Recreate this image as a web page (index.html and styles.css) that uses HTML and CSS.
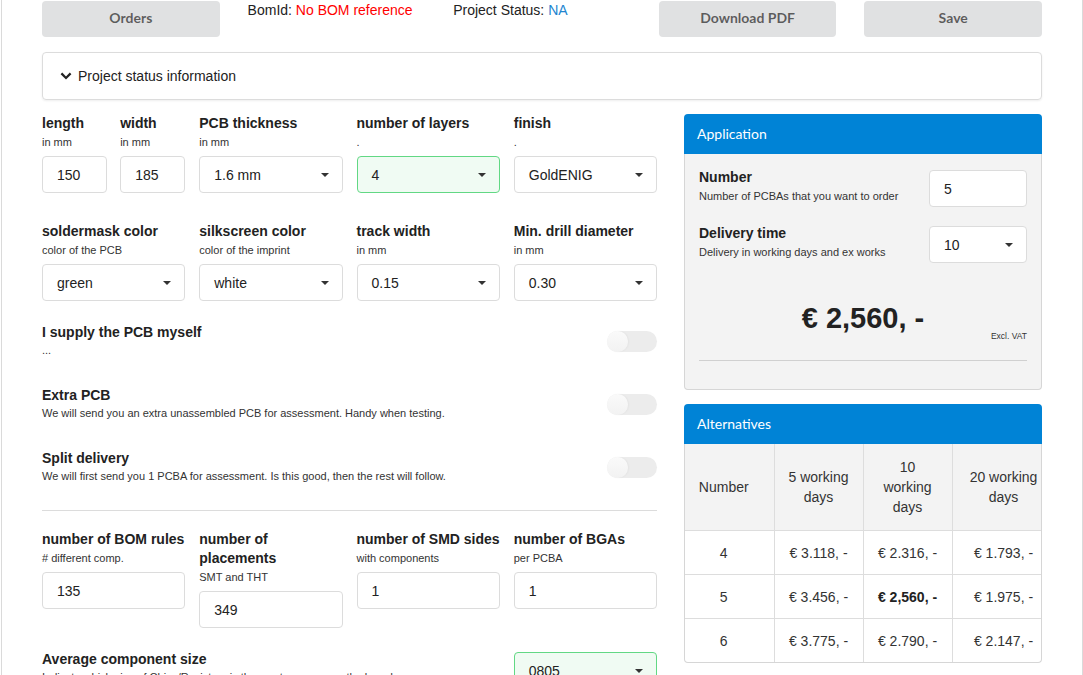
FILE: index.html
```html
<!DOCTYPE html>
<html lang="en">
<head>
<meta charset="utf-8">
<title>PCBA order</title>
<link rel="stylesheet" href="styles.css">
</head>
<body>
<div class="page">
  <div class="container">
    <div class="topbar">
      <button class="btn">Orders</button>
      <div class="meta">BomId: <span class="red">No BOM reference</span></div>
      <div class="meta">Project Status: <span class="blue">NA</span></div>
      <button class="btn">Download PDF</button>
      <button class="btn">Save</button>
    </div>

    <div class="accordion">
      <svg class="chev" width="12" height="8" viewBox="0 0 12 8"><path d="M1.4 1.4 6 6l4.6-4.6" fill="none" stroke="#222" stroke-width="2.2"/></svg>
      <span>Project status information</span>
    </div>

    <div class="main">
      <div class="form">
        <div class="grid4">
          <div class="pair">
            <div class="field">
              <div class="label">length</div>
              <div class="sub">in mm</div>
              <div class="input">150</div>
            </div>
            <div class="field">
              <div class="label">width</div>
              <div class="sub">in mm</div>
              <div class="input">185</div>
            </div>
          </div>
          <div class="field">
            <div class="label">PCB thickness</div>
            <div class="sub">in mm</div>
            <div class="input select">1.6 mm<span class="caret"></span></div>
          </div>
          <div class="field">
            <div class="label">number of layers</div>
            <div class="sub">.</div>
            <div class="input select ok">4<span class="caret"></span></div>
          </div>
          <div class="field">
            <div class="label">finish</div>
            <div class="sub">.</div>
            <div class="input select">GoldENIG<span class="caret"></span></div>
          </div>

          <div class="field">
            <div class="label">soldermask color</div>
            <div class="sub">color of the PCB</div>
            <div class="input select">green<span class="caret"></span></div>
          </div>
          <div class="field">
            <div class="label">silkscreen color</div>
            <div class="sub">color of the imprint</div>
            <div class="input select">white<span class="caret"></span></div>
          </div>
          <div class="field">
            <div class="label">track width</div>
            <div class="sub">in mm</div>
            <div class="input select">0.15<span class="caret"></span></div>
          </div>
          <div class="field">
            <div class="label">Min. drill diameter</div>
            <div class="sub">in mm</div>
            <div class="input select">0.30<span class="caret"></span></div>
          </div>
        </div>

        <div class="toggles">
          <div class="toggle-item">
            <div>
              <div class="t-title">I supply the PCB myself</div>
              <div class="t-desc">...</div>
            </div>
            <span class="toggle"></span>
          </div>
          <div class="toggle-item">
            <div>
              <div class="t-title">Extra PCB</div>
              <div class="t-desc">We will send you an extra unassembled PCB for assessment. Handy when testing.</div>
            </div>
            <span class="toggle"></span>
          </div>
          <div class="toggle-item">
            <div>
              <div class="t-title">Split delivery</div>
              <div class="t-desc">We will first send you 1 PCBA for assessment. Is this good, then the rest will follow.</div>
            </div>
            <span class="toggle"></span>
          </div>
        </div>

        <div class="divider"></div>

        <div class="grid4 row3">
          <div class="field">
            <div class="label">number of BOM rules</div>
            <div class="sub"># different comp.</div>
            <div class="input">135</div>
          </div>
          <div class="field">
            <div class="label">number of placements</div>
            <div class="sub">SMT and THT</div>
            <div class="input">349</div>
          </div>
          <div class="field">
            <div class="label">number of SMD sides</div>
            <div class="sub">with components</div>
            <div class="input">1</div>
          </div>
          <div class="field">
            <div class="label">number of BGAs</div>
            <div class="sub">per PCBA</div>
            <div class="input">1</div>
          </div>
        </div>

        <div class="grid4 avg">
          <div class="avg-text">
            <div class="t-title">Average component size</div>
            <div class="t-desc">Indicate which size of Chips/Resistors is the most common on the board</div>
          </div>
          <div class="input select ok avg-select">0805<span class="caret"></span></div>
        </div>
      </div>

      <div class="side">
        <div class="card">
          <div class="card-head">Application</div>
          <div class="card-body">
            <div class="app-row">
              <div>
                <div class="app-title">Number</div>
                <div class="app-sub">Number of PCBAs that you want to order</div>
              </div>
              <div class="input app-input">5</div>
            </div>
            <div class="app-row">
              <div>
                <div class="app-title">Delivery time</div>
                <div class="app-sub">Delivery in working days and ex works</div>
              </div>
              <div class="input select app-input">10<span class="caret"></span></div>
            </div>
            <div class="price">€ 2,560, -</div>
            <div class="excl">Excl. VAT</div>
            <div class="app-hr"></div>
          </div>
        </div>

        <div class="card alt">
          <div class="card-head">Alternatives</div>
          <div class="alt-body">
            <table class="alt-table">
              <colgroup>
                <col class="c1"><col class="c2"><col class="c3"><col class="c4">
              </colgroup>
              <thead>
                <tr>
                  <th class="first">Number</th>
                  <th>5 working<br>days</th>
                  <th>10<br>working<br>days</th>
                  <th>20 working<br>days</th>
                </tr>
              </thead>
              <tbody>
                <tr><td class="first">4</td><td>€ 3.118, -</td><td>€ 2.316, -</td><td>€ 1.793, -</td></tr>
                <tr><td class="first">5</td><td>€ 3.456, -</td><td class="strong">€ 2,560, -</td><td>€ 1.975, -</td></tr>
                <tr><td class="first">6</td><td>€ 3.775, -</td><td>€ 2.790, -</td><td>€ 2.147, -</td></tr>
              </tbody>
            </table>
          </div>
        </div>
      </div>
    </div>
  </div>
</div>
</body>
</html>
```

FILE: styles.css
```css
* { box-sizing: border-box; }

html, body { margin: 0; padding: 0; }

body {
  font-family: "Liberation Sans", Arial, Helvetica, sans-serif;
  color: #222;
  background: #fff;
  overflow: hidden;
}

.page {
  margin-left: 1px;
  width: 1082px;
  min-height: 675px;
  border-left: 1px solid #dadada;
  border-right: 1px solid #dadada;
  padding: 1px 0 0 40px;
}

.container { width: 1000px; }

/* top bar */
.topbar {
  display: grid;
  grid-template-columns: repeat(5, 1fr);
  column-gap: 28px;
  align-items: start;
}

.btn {
  height: 36px;
  border: 0;
  border-radius: 4px;
  background: #e0e1e2;
  color: rgba(0, 0, 0, 0.6);
  font-family: Lato, "Liberation Sans", sans-serif;
  font-weight: 700;
  font-size: 14px;
  padding: 0 0 3px;
}

.meta {
  font-size: 14px;
  line-height: 18px;
  color: #222;
}

.red { color: #ff0000; }
.blue { color: #2185d0; }

/* accordion */
.accordion {
  margin-top: 15px;
  height: 48px;
  border: 1px solid #dcdcdc;
  border-radius: 4px;
  box-shadow: 0 1px 2px rgba(34, 36, 38, 0.08);
  display: flex;
  align-items: center;
  padding: 0 0 1px 17px;
  gap: 6px;
  font-size: 14px;
  color: #222;
}

.chev { display: block; }

/* main layout */
.main {
  display: grid;
  grid-template-columns: 615px 358px;
  column-gap: 27px;
  margin-top: 14px;
  align-items: start;
}

.grid4 {
  display: grid;
  grid-template-columns: repeat(4, 1fr);
  column-gap: 14px;
  row-gap: 29px;
  align-items: start;
}

.pair {
  display: grid;
  grid-template-columns: 1fr 1fr;
  column-gap: 13px;
}

.label {
  font-size: 14px;
  font-weight: 700;
  line-height: 19px;
  color: #222;
}

.sub {
  font-size: 11px;
  line-height: 19px;
  color: #333;
}

.input {
  margin-top: 4px;
  height: 37px;
  border: 1px solid #dcdcdc;
  border-radius: 4px;
  background: #fff;
  padding: 0 14px;
  display: flex;
  align-items: center;
  font-size: 14px;
  color: #222;
}

.select { justify-content: space-between; padding-right: 13px; }

.caret {
  width: 0;
  height: 0;
  border-left: 4px solid transparent;
  border-right: 4px solid transparent;
  border-top: 4px solid #333;
}

.ok {
  background: #f0fbf3;
  border-color: #62d884;
}

/* toggles */
.toggles {
  margin-top: 22px;
  display: flex;
  flex-direction: column;
  gap: 27px;
}

.toggle-item {
  display: flex;
  justify-content: space-between;
  align-items: center;
}

.t-title {
  font-size: 14px;
  font-weight: 700;
  line-height: 18px;
  color: #222;
}

.t-desc {
  font-size: 11px;
  line-height: 18px;
  color: #333;
}

.toggle {
  position: relative;
  width: 50px;
  height: 21px;
  border-radius: 11px;
  background: #ececec;
  flex: none;
}

.toggle::before {
  content: "";
  position: absolute;
  left: 0;
  top: 0;
  width: 21px;
  height: 21px;
  border-radius: 50%;
  background: linear-gradient(#fafafa, #f2f2f2);
  box-shadow: 1px 0 2px rgba(0, 0, 0, 0.04);
}

.divider {
  margin-top: 25px;
  border-top: 1px solid #dcdcdc;
}

.row3 { padding-top: 19px; }

.avg { margin-top: 22px; }
.avg-text { grid-column: 1 / 4; }
.avg-select { margin-top: 2px; }

/* side cards */
.card-head {
  height: 40px;
  line-height: 40px;
  padding-left: 13px;
  background: #0083d6;
  color: #fff;
  font-family: Lato, "Liberation Sans", sans-serif;
  font-size: 14px;
  border-radius: 4px 4px 0 0;
}

.card-body {
  background: #f3f3f3;
  border: 1px solid #d6d6d6;
  border-top: 0;
  border-radius: 0 0 4px 4px;
  padding: 14px 14px 28px;
}

.app-row {
  display: flex;
  justify-content: space-between;
  align-items: flex-start;
}

.app-row + .app-row { margin-top: 17px; }

.app-title {
  font-size: 14px;
  font-weight: 700;
  line-height: 18px;
  color: #222;
}

.app-sub {
  font-size: 11px;
  line-height: 20px;
  color: #333;
}

.app-input {
  width: 98px;
  margin-top: 2px;
}

.price {
  margin-top: 38px;
  text-align: center;
  font-size: 29px;
  font-weight: 700;
  line-height: 34px;
  color: #222;
}

.excl {
  margin-top: -5px;
  text-align: right;
  font-size: 8.5px;
  line-height: 12px;
  color: #333;
}

.app-hr {
  margin-top: 18px;
  border-top: 1px solid #d0d0d0;
}

.alt { margin-top: 14px; }

.alt-body {
  border: 1px solid #d6d6d6;
  border-top: 0;
  border-radius: 0 0 4px 4px;
  overflow: hidden;
  background: #fff;
}

.alt-table {
  width: 370px;
  table-layout: fixed;
  border-collapse: collapse;
  font-size: 14px;
  color: #333;
}

.c1, .c2, .c3 { width: 89px; }
.c4 { width: 103px; }

.alt-table th {
  background: #f3f3f3;
  font-weight: 400;
  line-height: 20px;
  padding: 13px 8px;
  border-right: 1px solid #ddd;
  border-bottom: 1px solid #ddd;
  text-align: center;
}

.alt-table td {
  line-height: 20px;
  padding: 12px 8px 11px;
  text-align: center;
  border-right: 1px solid #ddd;
  border-bottom: 1px solid #ddd;
}

.alt-table tbody tr:last-child td { border-bottom: 0; }

.alt-table .first { padding-left: 8px; padding-right: 19px; }

.alt-table .strong { font-weight: 700; color: #222; }
```
